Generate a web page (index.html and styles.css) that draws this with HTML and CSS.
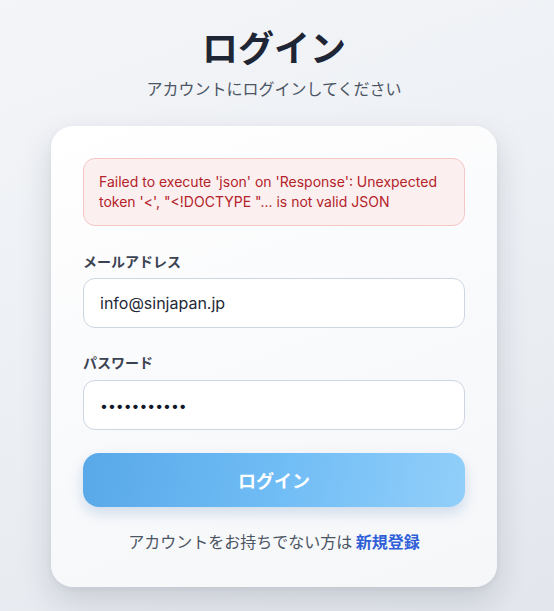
FILE: index.html
```html
<!DOCTYPE html>
<html lang="ja">
<head>
<meta charset="utf-8">
<link rel="stylesheet" href="styles.css">
</head>
<body>
<main class="page">
  <header class="head">
    <h1 class="title">ログイン</h1>
    <p class="subtitle">アカウントにログインしてください</p>
  </header>
  <section class="card">
    <div class="error">Failed to execute 'json' on 'Response': Unexpected token '&lt;', "&lt;!DOCTYPE "... is not valid JSON</div>
    <div class="field">
      <label class="label">メールアドレス</label>
      <div class="input">info@sinjapan.jp</div>
    </div>
    <div class="field">
      <label class="label">パスワード</label>
      <div class="input pw">•••••••••••</div>
    </div>
    <button class="btn">ログイン</button>
    <p class="foot">アカウントをお持ちでない方は <a class="link">新規登録</a></p>
  </section>
</main>
</body>
</html>
```
FILE: styles.css
```css
* { box-sizing: border-box; }
html, body { margin: 0; height: 100%; }
body {
  font-family: Inter, "Noto Sans CJK JP", sans-serif;
  background: linear-gradient(160deg, #f3f5f8 0%, #eceff4 50%, #e3e6ec 100%);
  color: #1f2937;
}
.page {
  display: flex;
  flex-direction: column;
  align-items: center;
  padding: 25px 6px 0 0;
}
.head { text-align: center; }
.title {
  margin: 0;
  font-size: 36px;
  line-height: 42px;
  font-weight: 700;
  color: #1e2535;
  font-family: "Noto Sans CJK JP", sans-serif;
}
.subtitle {
  margin: 9px 0 0;
  font-size: 16px;
  line-height: 24px;
  color: #4b5563;
  font-family: "Noto Sans CJK JP", sans-serif;
}
.card {
  margin-top: 26px;
  width: 446px;
  padding: 32px 32px 34px;
  border-radius: 22px;
  background: linear-gradient(160deg, #ffffff 0%, #f8f9fb 60%, #f6f7f9 100%);
  box-shadow: 0 14px 32px rgba(30, 40, 60, 0.15), 0 2px 6px rgba(30, 40, 60, 0.05);
  display: flex;
  flex-direction: column;
}
.error {
  background: #fcefef;
  border: 1px solid #f5c6c6;
  border-radius: 12px;
  padding: 13px 15px;
  font-size: 14px;
  line-height: 20px;
  color: #b4232a;
}
.field { margin-top: 25px; display: flex; flex-direction: column; }
.field + .field { margin-top: 24px; }
.label {
  font-size: 14px;
  line-height: 20px;
  font-weight: 700;
  color: #3b4252;
  font-family: "Noto Sans CJK JP", sans-serif;
  margin-bottom: 7px;
}
.field + .field .label { margin-bottom: 8px; }
.input {
  height: 50px;
  border: 1px solid #cdd5e3;
  border-radius: 12px;
  background: #fff;
  padding: 0 16px;
  display: flex;
  align-items: center;
  font-size: 16px;
  color: #1f2937;
}
.pw { font-size: 14px; letter-spacing: 0; color: #111827; }
.btn {
  margin-top: 23px;
  height: 54px;
  border: none;
  border-radius: 16px;
  background: linear-gradient(100deg, #59a8e8 0%, #6fbcf5 50%, #92cffa 100%);
  color: #fff;
  font-size: 18px;
  font-weight: 700;
  font-family: "Noto Sans CJK JP", sans-serif;
  box-shadow: 0 6px 14px rgba(60, 120, 180, 0.22);
}
.foot {
  margin: 22px 0 0;
  text-align: center;
  font-size: 16px;
  line-height: 24px;
  color: #4b5563;
  font-family: "Noto Sans CJK JP", sans-serif;
}
.link { color: #2f5fd8; font-weight: 700; }
```
